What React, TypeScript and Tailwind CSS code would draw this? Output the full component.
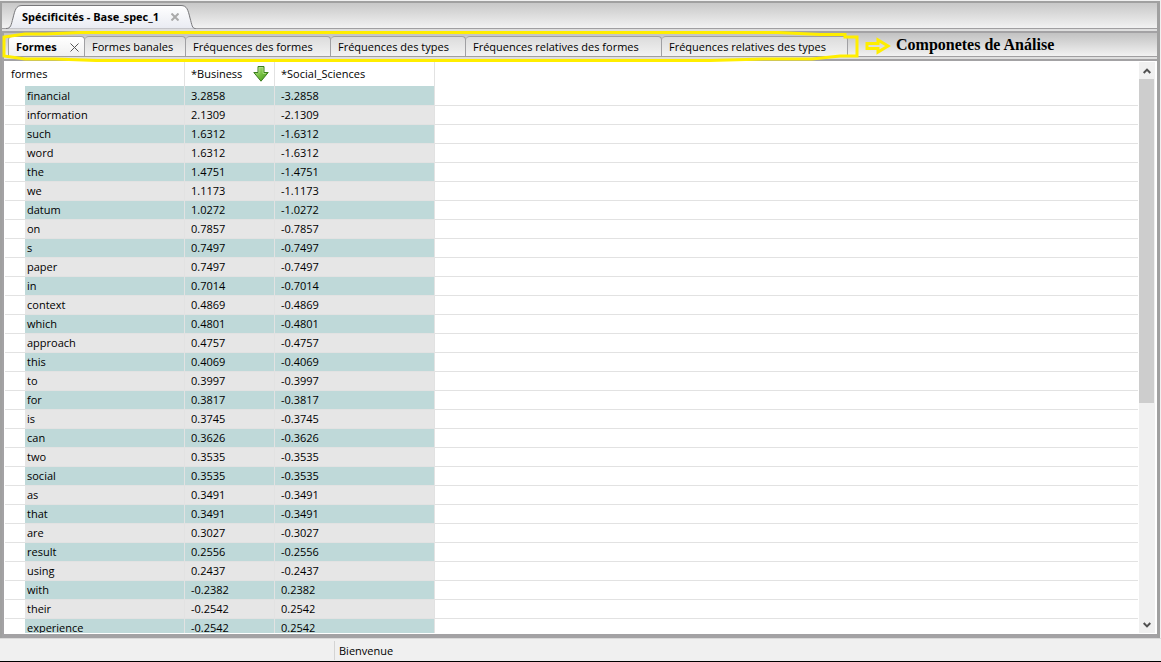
import React from "react";

const rows: [string, string, string][] = [
  ["financial", "3.2858", "-3.2858"],
  ["information", "2.1309", "-2.1309"],
  ["such", "1.6312", "-1.6312"],
  ["word", "1.6312", "-1.6312"],
  ["the", "1.4751", "-1.4751"],
  ["we", "1.1173", "-1.1173"],
  ["datum", "1.0272", "-1.0272"],
  ["on", "0.7857", "-0.7857"],
  ["s", "0.7497", "-0.7497"],
  ["paper", "0.7497", "-0.7497"],
  ["in", "0.7014", "-0.7014"],
  ["context", "0.4869", "-0.4869"],
  ["which", "0.4801", "-0.4801"],
  ["approach", "0.4757", "-0.4757"],
  ["this", "0.4069", "-0.4069"],
  ["to", "0.3997", "-0.3997"],
  ["for", "0.3817", "-0.3817"],
  ["is", "0.3745", "-0.3745"],
  ["can", "0.3626", "-0.3626"],
  ["two", "0.3535", "-0.3535"],
  ["social", "0.3535", "-0.3535"],
  ["as", "0.3491", "-0.3491"],
  ["that", "0.3491", "-0.3491"],
  ["are", "0.3027", "-0.3027"],
  ["result", "0.2556", "-0.2556"],
  ["using", "0.2437", "-0.2437"],
  ["with", "-0.2382", "0.2382"],
  ["their", "-0.2542", "0.2542"],
  ["experience", "-0.2542", "0.2542"],
];

const tabs = [
  { label: "Formes banales", width: "w-[101px]" },
  { label: "Fréquences des formes", width: "w-[145px]" },
  { label: "Fréquences des types", width: "w-[135px]" },
  { label: "Fréquences relatives des formes", width: "w-[196px]" },
  { label: "Fréquences relatives des types", width: "w-[186px]" },
];

function SortArrow() {
  return (
    <svg width="16" height="16" viewBox="0 0 16 16" aria-hidden="true">
      <defs>
        <linearGradient id="sort" x1="0" y1="0" x2="1" y2="1">
          <stop offset="0" stopColor="#c4e8a0" />
          <stop offset="0.5" stopColor="#78c043" />
          <stop offset="1" stopColor="#3f9413" />
        </linearGradient>
      </defs>
      <path d="M5 0.5h6v6h4.200L8 15.200 0.800 6.500H5z" fill="url(#sort)" stroke="#3a7d1c" strokeLinejoin="round" />
      <path d="M6 7V1.500H10V7.500H13" fill="none" stroke="#b9e496" strokeOpacity="0.7" />
    </svg>
  );
}

function DocumentBar() {
  return (
    <div className="relative h-[26px] shrink-0 border-b border-[#a09fa1] bg-linear-to-b from-[#c8c8c8] to-[#f2f2f2]">
      <svg className="absolute top-[2px] left-[4px]" width="190" height="24" aria-hidden="true">
        <defs>
          <linearGradient id="doc" x1="0" y1="0" x2="0" y2="1">
            <stop offset="0" stopColor="#ffffff" />
            <stop offset="1" stopColor="#e9ebf2" />
          </linearGradient>
        </defs>
        <path
          d="M0 23.500C5 23.500 5 20 7 13C9 5 10 0.500 16 0.500H175C181 0.500 182 5 184 13C186 20 186 23.500 189.500 23.500"
          fill="url(#doc)"
          stroke="#77777a"
        />
      </svg>
      <div className="relative flex h-full items-center gap-3 pt-[2px] pl-5">
        <button className="font-bold">Spécificités - Base_spec_1</button>
        <button aria-label="Fermer l'onglet" className="pt-px text-[#aaaaaa]">
          <svg viewBox="0 0 8 8" className="size-2" fill="none" stroke="currentColor" strokeWidth="2">
            <path d="M0.500 0.500 7.500 7.500M7.500 0.500 0.500 7.500" />
          </svg>
        </button>
      </div>
    </div>
  );
}

function ComponentBar() {
  return (
    <div className="relative flex h-[24px] shrink-0 border-b border-[#a09fa1] bg-linear-to-b from-[#c2c2c2] to-[#f2f2f2] pt-[3px] pl-1">
      <div className="flex w-[77px] items-center justify-between rounded-t-sm border border-b-0 border-[#a0a0a3] bg-linear-to-b from-white to-[#f0f0f0] pr-[5px] pl-[7px]">
        <button className="font-bold">Formes</button>
        <button aria-label="Fermer Formes" className="pt-[2px] text-[#555555]">
          <svg viewBox="0 0 9 9" className="size-[9px]" fill="none" stroke="currentColor">
            <path d="M0.500 0.500 8.500 8.500M8.500 0.500 0.500 8.500" />
          </svg>
        </button>
      </div>
      {tabs.map((t) => (
        <button
          key={t.label}
          className={`${t.width} shrink-0 rounded-t-sm border-t border-r border-[#a0a0a3] bg-linear-to-b from-[#dcdcdc] to-[#f2f2f2] pl-[7px] text-left whitespace-nowrap`}
        >
          {t.label}
        </button>
      ))}
      <svg className="absolute -top-[3px] -left-[4px] z-10" width="900" height="34" aria-hidden="true" fill="none" stroke="#ffee00" strokeWidth="3">
        <path d="M4 25V7L25 4H45L80 2.500H778L820 4.500H845V7H857V26H840L812 29H765L710 30.500H96L55 29H25L4 26Z" />
        <path d="M867 13.500H878V10L888 16 878 22V18.500H867Z" />
      </svg>
      <p className="ml-12 self-center pb-[2px] font-['Liberation_Serif',serif] text-base leading-4 font-bold whitespace-nowrap">
        Componetes de Análise
      </p>
    </div>
  );
}

function ResultsTable() {
  return (
    <table className="w-full table-fixed border-separate border-spacing-0 text-left">
      <colgroup>
        <col className="w-[20px]" />
        <col className="w-[160px]" />
        <col className="w-[90px]" />
        <col className="w-[160px]" />
        <col />
      </colgroup>
      <thead>
        <tr className="h-[25px]">
          <th colSpan={2} className="border-r border-[#e2e2e2] p-0 pl-[6px] font-normal">formes</th>
          <th className="border-r border-[#e2e2e2] p-0 pl-[6px] font-normal">
            <div className="flex items-center justify-between pr-[5px]">
              *Business
              <SortArrow />
            </div>
          </th>
          <th className="border-r border-[#e2e2e2] p-0 pl-[6px] font-normal">*Social_Sciences</th>
          <th className="p-0" />
        </tr>
      </thead>
      <tbody>
        {rows.map(([form, business, social]) => (
          <tr key={form} className="group h-[19px] first:h-[20px]">
            <td className="border-b border-[#e2e2e2] p-0" />
            <td className="border-r border-b border-[#e2e2e2] bg-[#e6e6e6] p-0 pl-[2px] group-odd:bg-[#bfd9d9]">{form}</td>
            <td className="border-r border-b border-[#e2e2e2] bg-[#e6e6e6] p-0 pl-[6px] group-odd:bg-[#bfd9d9]">{business}</td>
            <td className="border-r border-b border-[#e2e2e2] bg-[#e6e6e6] p-0 pl-[6px] group-odd:bg-[#bfd9d9]">{social}</td>
            <td className="border-b border-[#e2e2e2] p-0" />
          </tr>
        ))}
      </tbody>
    </table>
  );
}

function ScrollBar() {
  return (
    <div className="flex w-[16px] shrink-0 flex-col bg-[#f0f0f0]">
      <button aria-label="Défiler vers le haut" className="flex h-[17px] items-center justify-center">
        <svg width="8" height="6" viewBox="0 0 8 6" fill="none" stroke="#505050" strokeWidth="2">
          <path d="M0.700 5 4 1.600 7.300 5" />
        </svg>
      </button>
      <div className="h-[324px] w-[15px] bg-[#cdcdcd]" />
      <div className="flex-1" />
      <button aria-label="Défiler vers le bas" className="flex h-[17px] items-center justify-center">
        <svg width="8" height="6" viewBox="0 0 8 6" fill="none" stroke="#505050" strokeWidth="2">
          <path d="M0.700 1 4 4.400 7.300 1" />
        </svg>
      </button>
    </div>
  );
}

export default function App() {
  return (
    <div className="flex h-screen flex-col overflow-hidden bg-[#f0f0f0] pt-px font-['Open_Sans','Noto_Sans',sans-serif] text-[11px] leading-4 text-black">
      <main className="mr-px flex min-h-0 flex-1 flex-col border-t-2 border-r-3 border-l-2 border-[#a0a0a0]">
        <DocumentBar />
        <div className="h-[2px] shrink-0 bg-[#dedede]" />
        <div className="flex min-h-0 flex-1 flex-col border-t-2 border-b-4 border-l-2 border-[#a3a2a4]">
          <ComponentBar />
          <div className="h-[2px] shrink-0 bg-[#dedede]" />
          <div className="h-[2px] shrink-0 bg-[#a3a2a4]" />
          <div className="flex min-h-0 flex-1 bg-white pr-[2px] pl-px">
            <div className="mr-px mb-px min-w-0 flex-1 overflow-hidden">
              <ResultsTable />
            </div>
            <div className="flex py-px">
              <ScrollBar />
            </div>
          </div>
        </div>
      </main>
      <footer className="flex h-[24px] shrink-0 border-t border-b border-t-[#dadada] border-b-black pt-[2px]">
        <div className="mb-px w-[335px] border-r border-[#d4d4d4]" />
        <p className="flex items-center pl-1">Bienvenue</p>
      </footer>
    </div>
  );
}
